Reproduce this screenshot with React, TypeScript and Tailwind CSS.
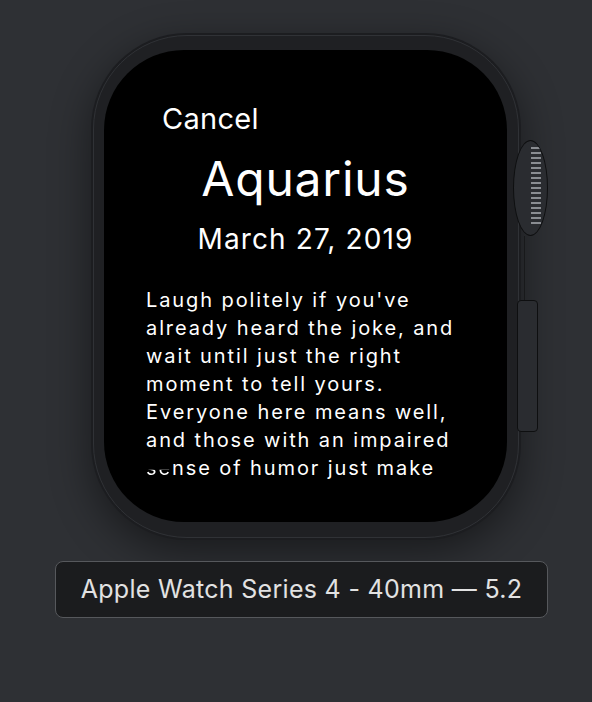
import React from 'react';

const lines = [
  "Laugh politely if you've",
  'already heard the joke, and',
  'wait until just the right',
  'moment to tell yours.',
  'Everyone here means well,',
  'and those with an impaired',
];

const Crown = () => (
  <div className="relative w-[35px] h-[96px] rounded-[50%] border border-[#0e0f10] bg-[#2a2c30] overflow-hidden">
    <div className="absolute right-[6px] top-[6px] flex flex-col gap-[3px]">
      {Array.from({ length: 16 }).map((_, i) => (
        <div key={i} className="w-[10px] h-[2px] bg-[#8a8d92]" />
      ))}
    </div>
  </div>
);

export default function App() {
  return (
    <div
      className="w-[592px] h-[702px] overflow-hidden bg-[#2e3034] flex flex-col"
      style={{ fontFamily: 'Inter, "Noto Sans", sans-serif' }}
    >
      <div className="pl-[91px] pt-[33px] flex items-start">
        <div className="w-[430px] h-[507px] rounded-[96px] bg-[#1c1d20] p-[2px] shadow-[0_12px_40px_rgba(0,0,0,0.45)]">
          <div className="h-full rounded-[94px] border border-[#303236] bg-[#1f2023] pt-[14px] pb-[15px] pl-[10px] pr-[11px]">
            <div className="h-full rounded-[80px] bg-black overflow-hidden text-white">
              <div className="pt-[52px]">
                <div className="pl-[58px] text-[29px] leading-[34px] tracking-[0.3px]">Cancel</div>
                <div className="mt-[15px] text-center text-[48px] leading-[56px] tracking-[0.8px]">Aquarius</div>
                <div className="mt-[15px] text-center text-[28px] leading-[34px] tracking-[1.1px]">March 27, 2019</div>
                <div className="mt-[30px] pl-[42px] text-[20px] leading-[28px] tracking-[1.9px]">
                  {lines.map((l) => (
                    <div key={l} className="whitespace-nowrap">{l}</div>
                  ))}
                  <div className="whitespace-nowrap">
                    <span className="bg-gradient-to-b from-transparent from-55% to-white to-60% bg-clip-text text-transparent">se</span>
                    nse of humor just make
                  </div>
                </div>
              </div>
            </div>
          </div>
        </div>

        <div className="-ml-[8px] mt-[107px] flex flex-col">
          <Crown />
          <div className="ml-[11px] w-[1px] h-[64px] bg-[#18191b]" />
          <div className="ml-[4px] w-[21px] h-[132px] rounded-[4px] border border-[#0e0f10] bg-[#2a2c30]" />
        </div>
      </div>

      <div className="mt-[21px] ml-[55px] w-[493px] h-[57px] rounded-[8px] border border-[#56585c] bg-[#1b1c1e] flex items-center justify-center">
        <span className="text-[25px] tracking-[0.3px] text-[#e2e2e2]">Apple Watch Series 4 - 40mm — 5.2</span>
      </div>
    </div>
  );
}
